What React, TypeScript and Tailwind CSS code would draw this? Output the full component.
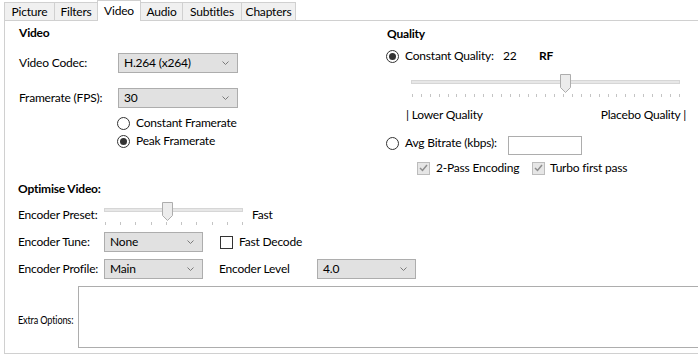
import React from "react";

const FONT = "font-['Segoe_UI','Lato',sans-serif]";

function Chevron() {
  return (
    <svg width="7" height="4" viewBox="0 0 7 4" className="shrink-0">
      <path d="M0.5 0.5 L3.5 3.5 L6.5 0.5" fill="none" stroke="#7a7a7a" strokeWidth="1" />
    </svg>
  );
}

function Combo({ value, w }: { value: string; w: string }) {
  return (
    <div className={`${w} flex h-[20px] shrink-0 items-center justify-between border border-[#adadad] bg-[#e1e1e1] pl-[5px] pr-[8px] pb-[1px]`}>
      <span>{value}</span>
      <Chevron />
    </div>
  );
}

function Radio({ checked }: { checked?: boolean }) {
  return (
    <span className="flex h-[13px] w-[13px] shrink-0 items-center justify-center rounded-full border border-[#333] bg-white">
      {checked && <span className="h-[7px] w-[7px] rounded-full bg-[#333]" />}
    </span>
  );
}

function Check({ checked, disabled }: { checked?: boolean; disabled?: boolean }) {
  return (
    <span
      className={`flex h-[13px] w-[13px] shrink-0 items-center justify-center border ${
        disabled ? "border-[#bcbcbc] bg-[#e6e6e6]" : "border-[#333] bg-white"
      }`}
    >
      {checked && (
        <svg width="9" height="8" viewBox="0 0 9 8">
          <path d="M1 4 L3.5 6.5 L8 1" fill="none" stroke={disabled ? "#8d8d8d" : "#333"} strokeWidth="1.5" />
        </svg>
      )}
    </span>
  );
}

/** Curseur Windows : piste, pouce pentagonal, graduations dessous. */
function Slider({ width, ticks, pos }: { width: number; ticks: number; pos: number }) {
  const thumbLeft = Math.round(pos * (width - 11));
  return (
    <div className="relative h-[23px] shrink-0" style={{ width }}>
      <div className="absolute left-0 right-0 top-[6px] h-[4px] border border-[#d6d6d6] bg-[#e7e7e7]" />
      <svg width="11" height="19" viewBox="0 0 11 19" className="absolute top-0" style={{ left: thumbLeft }}>
        <path d="M0.5 0.5 H10.5 V13.5 L5.5 18.5 L0.5 13.5 Z" fill="#ececec" stroke="#adadad" />
      </svg>
      <div className="absolute bottom-0 left-[1px] right-0 flex h-[3px] justify-between">
        {Array.from({ length: ticks }).map((_, i) => (
          <span key={i} className="h-[3px] w-px bg-[#c4c4c4]" />
        ))}
      </div>
    </div>
  );
}

const TABS = [
  { name: "Picture", w: "w-[50px]" },
  { name: "Filters", w: "w-[43px]" },
  { name: "Video", w: "w-[44px]", active: true },
  { name: "Audio", w: "w-[41px]" },
  { name: "Subtitles", w: "w-[59px]" },
  { name: "Chapters", w: "w-[55px]", last: true },
];

export default function App() {
  return (
    <div className={`${FONT} h-[358px] w-[698px] overflow-hidden whitespace-nowrap bg-white text-[12px] leading-[16px] tracking-[-0.2px] text-black`}>
      <div className="relative z-10 flex h-[21px] items-start pl-[4px]">
        {TABS.map((t) =>
          t.active ? (
            <div key={t.name} className={`${t.w} flex h-[21px] items-center justify-center border-x border-t border-[#d0d0d0] bg-white pb-[1px]`}>
              {t.name}
            </div>
          ) : (
            <div
              key={t.name}
              className={`${t.w} mt-[2px] flex h-[18px] items-center justify-center border-t border-[#d0d0d0] bg-[#f0f0f0] ${
                t.last ? "border-r" : ""
              } ${t.name === "Audio" ? "" : "border-l"}`}
            >
              {t.name}
            </div>
          )
        )}
      </div>

      <div className="-mt-px ml-[4px] h-[334px] w-[720px] border border-[#d0d0d0]">
        <div className="flex">
          {/* Video */}
          <div className="w-[381px] pl-[14px]">
            <div className="flex h-[24px] items-center font-bold">Video</div>
            <div className="mt-[8px] flex items-center">
              <span className="w-[99px]">Video Codec:</span>
              <Combo value="H.264 (x264)" w="w-[120px]" />
            </div>
            <div className="mt-[15px] flex items-center">
              <span className="w-[99px]">Framerate (FPS):</span>
              <Combo value="30" w="w-[120px]" />
            </div>
            <div className="mt-[7px] flex h-[16px] items-center gap-[6px] pl-[98px]">
              <Radio />
              <span>Constant Framerate</span>
            </div>
            <div className="mt-[2px] flex h-[16px] items-center gap-[6px] pl-[98px]">
              <Radio checked />
              <span>Peak Framerate</span>
            </div>
          </div>

          {/* Quality */}
          <div className="flex-1 pt-[1px]">
            <div className="flex h-[24px] items-center pl-px font-bold">Quality</div>
            <div className="mt-[2px] flex h-[16px] items-center">
              <Radio checked />
              <span className="ml-[6px] w-[98px]">Constant Quality:</span>
              <span className="w-[36px]">22</span>
              <span className="font-bold">RF</span>
            </div>
            <div className="mt-[10px] pl-[25px]">
              <Slider width={269} ticks={31} pos={0.578} />
            </div>
            <div className="mt-[10px] flex h-[16px] w-[300px] items-center justify-between pl-[20px]">
              <span>| Lower Quality</span>
              <span>Placebo Quality |</span>
            </div>
            <div className="mt-[12px] flex h-[20px] items-start">
              <div className="flex h-[16px] items-center">
                <Radio />
                <span className="ml-[6px] w-[103px]">Avg Bitrate (kbps):</span>
              </div>
              <div className="mt-px h-[19px] w-[74px] border border-[#adadad] bg-white" />
            </div>
            <div className="mt-[5px] flex h-[16px] items-center pl-[31px]">
              <Check checked disabled />
              <span className="ml-[6px] w-[96px]">2-Pass Encoding</span>
              <Check checked disabled />
              <span className="ml-[5px]">Turbo first pass</span>
            </div>
          </div>
        </div>

        {/* Optimise Video */}
        <div className="mt-[5px] pl-[13px]">
          <div className="flex h-[16px] items-center font-bold">Optimise Video:</div>
          <div className="mt-[3px] flex h-[28px] items-start">
            <span className="mt-[7px] w-[86px]">Encoder Preset:</span>
            <div className="mt-[2px]">
              <Slider width={139} ticks={10} pos={0.453} />
            </div>
            <span className="ml-[9px] mt-[7px]">Fast</span>
          </div>
          <div className="mt-[4px] flex items-center">
            <span className="w-[86px]">Encoder Tune:</span>
            <Combo value="None" w="w-[99px]" />
            <span className="ml-[17px]">
              <Check />
            </span>
            <span className="ml-[6px]">Fast Decode</span>
          </div>
          <div className="mt-[7px] flex items-center">
            <span className="w-[86px]">Encoder Profile:</span>
            <Combo value="Main" w="w-[99px]" />
            <span className="ml-[16px] w-[98px]">Encoder Level</span>
            <Combo value="4.0" w="w-[99px]" />
          </div>
          <div className="mt-[7px] flex items-center">
            <span className="w-[60px] overflow-hidden pt-[6px]">
              <span className="inline-block origin-left scale-x-[0.76]">Extra Options:</span>
            </span>
            <div className="h-[62px] w-[640px] border border-[#adadad] bg-white" />
          </div>
        </div>
      </div>
    </div>
  );
}
